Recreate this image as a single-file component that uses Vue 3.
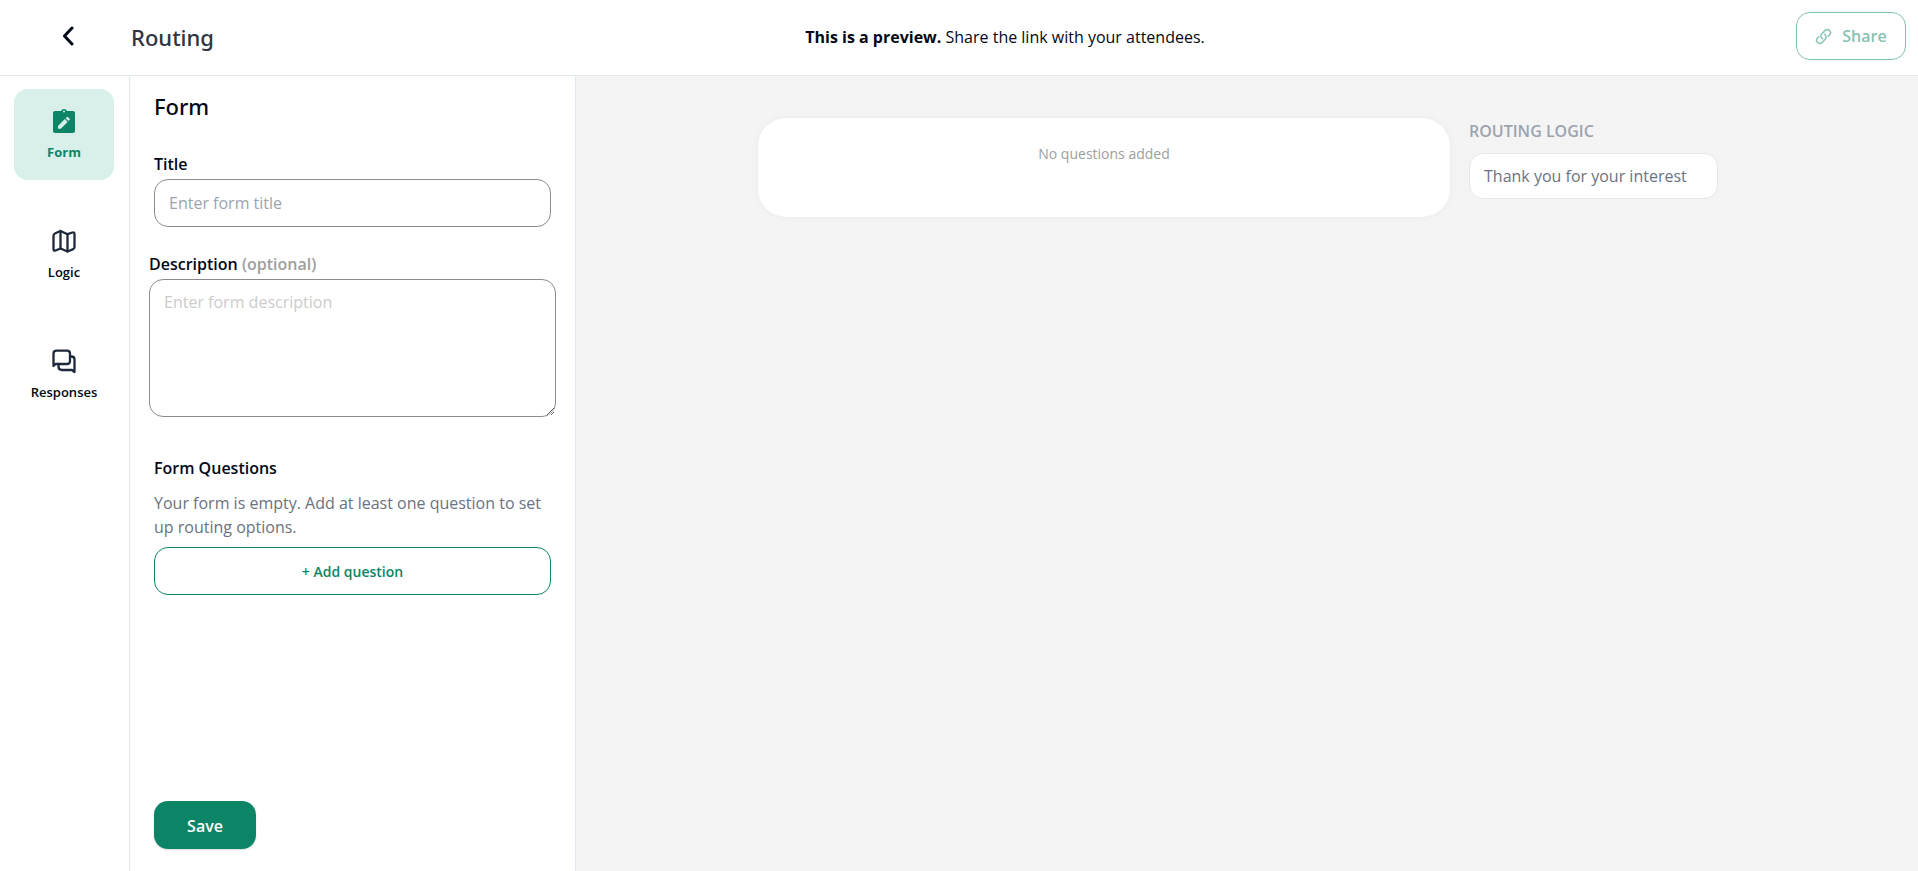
<template>
  <div class="page">
    <header class="top-bar">
      <div class="top-left">
        <button class="back-btn" aria-label="Back">
          <svg width="12" height="20" viewBox="0 0 12 20" fill="none" stroke="currentColor" stroke-width="3" stroke-linecap="round" stroke-linejoin="round">
            <path d="M10 2L2.500 10L10 18" />
          </svg>
        </button>
        <h1>Routing</h1>
      </div>
      <p class="preview-note"><strong>This is a preview.</strong> Share the link with your attendees.</p>
      <button class="share-btn" disabled>
        <svg width="17" height="17" viewBox="0 0 24 24" fill="none" stroke="currentColor" stroke-width="2" stroke-linecap="round" stroke-linejoin="round">
          <path d="M13.190 8.688a4.500 4.500 0 0 1 1.242 7.244l-4.500 4.500a4.500 4.500 0 0 1-6.364-6.364l1.757-1.757m13.350-.622 1.757-1.757a4.500 4.500 0 0 0-6.364-6.364l-4.500 4.500a4.500 4.500 0 0 0 1.242 7.244" />
        </svg>
        Share
      </button>
    </header>

    <div class="body">
      <nav class="side-nav">
        <button
          v-for="tab in tabs"
          :key="tab.name"
          class="nav-item"
          :class="{ active: tab.name === activeTab }"
          @click="activeTab = tab.name"
        >
          <svg v-if="tab.name === 'Form'" width="28" height="28" viewBox="0 0 28 28" fill="currentColor" fill-rule="evenodd">
            <path d="M5 3H11Q11.700 1 14 1T17 3H23Q25 3 25 5V23Q25 25 23 25H5Q3 25 3 23V5Q3 3 5 3ZM14 2.600A1 1 0 0 0 14 4.600A1 1 0 0 0 14 2.600ZM8 17.900V20.700H10.800L17.600 13.900L14.800 11.100ZM15.600 10.300L18.400 13.100L19.700 11.800Q20.200 11.300 19.700 10.800L17.900 9Q17.400 8.500 16.900 9Z" />
          </svg>
          <svg v-else-if="tab.name === 'Logic'" width="28" height="28" viewBox="0 1 28 28" fill="none" stroke="currentColor" stroke-width="2.300" stroke-linecap="round" stroke-linejoin="round">
            <path d="M10.500 4L5.300 6.300Q3.500 7.100 3.500 8.800V22Q3.500 24.200 5.500 23.500L10.500 21.500L17.500 24.500L22.700 22.400Q24.500 21.600 24.500 20V7Q24.500 5 22.500 5.500L17.500 7.200Z" />
            <path d="M10.500 4V21.500M17.500 7.200V24.500" />
          </svg>
          <svg v-else width="28" height="28" viewBox="0 1 28 28" fill="none" stroke="currentColor" stroke-width="2.300" stroke-linecap="round" stroke-linejoin="round">
            <path d="M3.500 19V6.500Q3.500 3.700 6.500 3.700H17Q20 3.700 20 6.500V14Q20 17 17 17H5.500Z" />
            <path d="M20 9.500H21.500Q24.500 9.500 24.500 12.500V25L22 23H12Q8.500 23 8.500 19.500V17" />
          </svg>
          <span>{{ tab.name }}</span>
        </button>
      </nav>

      <form class="form-panel" @submit.prevent>
        <h2>Form</h2>

        <div class="field">
          <label for="form-title">Title</label>
          <input id="form-title" v-model="form.title" type="text" placeholder="Enter form title" />
        </div>

        <div class="field wide">
          <label for="form-description">Description <span class="optional">(optional)</span></label>
          <textarea id="form-description" v-model="form.description" placeholder="Enter form description"></textarea>
        </div>

        <section class="questions">
          <h3>Form Questions</h3>
          <p>Your form is empty. Add at least one question to set up routing options.</p>
          <button type="button" class="add-btn">+ Add question</button>
        </section>

        <button type="submit" class="save-btn">Save</button>
      </form>

      <main class="preview">
        <div class="preview-card">No questions added</div>
        <aside class="routing">
          <h4>ROUTING LOGIC</h4>
          <div class="routing-item">Thank you for your interest</div>
        </aside>
      </main>
    </div>
  </div>
</template>

<script setup>
import { reactive, ref } from "vue";

const tabs = [{ name: "Form" }, { name: "Logic" }, { name: "Responses" }];
const activeTab = ref("Form");

const form = reactive({
  title: "",
  description: "",
});
</script>

<style>
body {
  margin: 0;
}
</style>

<style scoped>
.page {
  display: flex;
  flex-direction: column;
  min-height: 100vh;
  background: #fff;
  color: #020817;
  font-family: "Segoe UI", "Open Sans", "Noto Sans", sans-serif;
  font-size: 16px;
  line-height: 24px;
}

.page *,
.page {
  box-sizing: border-box;
}

h1,
h2,
h3,
h4,
p {
  margin: 0;
  font-weight: 600;
}

h1,
h2 {
  font-family: "Segoe UI", "Noto Sans", sans-serif;
  font-size: 22px;
  font-weight: 500;
  line-height: 32px;
}

button,
input,
textarea {
  font: inherit;
  color: inherit;
}

button {
  cursor: pointer;
}

/* Top bar */
.top-bar {
  display: flex;
  align-items: center;
  justify-content: space-between;
  padding: 12px 12px 15px 48px;
  border-bottom: 1px solid #e2e8f0;
}

.top-left {
  display: flex;
  align-items: center;
  gap: 43px;
}

.back-btn {
  display: flex;
  justify-content: center;
  width: 40px;
  padding: 0;
  border: none;
  background: transparent;
}

h1 {
  padding-top: 2px;
  color: #2f3440;
}

.preview-note {
  padding-top: 2px;
  font-weight: 400;
}

.preview-note strong {
  font-weight: 700;
}

.share-btn {
  display: flex;
  align-items: center;
  justify-content: center;
  gap: 10px;
  width: 110px;
  height: 48px;
  padding: 0;
  border: 1px solid #0b8566;
  border-radius: 14px;
  background: #fff;
  color: #0b8566;
  font-weight: 600;
  opacity: 0.5;
}

.body {
  display: flex;
  flex: 1;
}

/* Side nav */
.side-nav {
  display: flex;
  flex-direction: column;
  gap: 29px;
  width: 130px;
  padding: 13px 14px;
  border-right: 1px solid #e2e8f0;
}

.nav-item {
  display: flex;
  flex-direction: column;
  align-items: center;
  gap: 4px;
  width: 100px;
  height: 91px;
  padding: 19px 0 0;
  border: none;
  border-radius: 14px;
  background: transparent;
  font-size: 13px;
  font-weight: 600;
}

.nav-item svg {
  color: #1e293b;
}

.nav-item.active {
  background: #d8f0e9;
  color: #0b8566;
  font-weight: 700;
}

.nav-item.active svg {
  color: #0b8566;
}

/* Form panel */
.form-panel {
  display: flex;
  flex-direction: column;
  width: 446px;
  padding: 14px 24px 22px;
  border-right: 1px solid #e2e8f0;
}

h2 {
  margin-bottom: 30px;
}

.field {
  display: flex;
  flex-direction: column;
  gap: 3px;
  margin-bottom: 25px;
  font-weight: 600;
}

.field.wide {
  margin: 0 -5px 39px;
}

.optional {
  color: #9e9e9e;
}

.field input,
.field textarea {
  width: 100%;
  height: 48px;
  padding: 0 14px;
  border: 1px solid #8c8c8c;
  border-radius: 14px;
  background: #fff;
  font-weight: 400;
}

.field textarea {
  height: 138px;
  padding: 10px 14px;
  resize: vertical;
}

.field input::placeholder {
  color: #9ca3af;
}

.field textarea::placeholder {
  color: #cccccc;
}

.questions {
  display: flex;
  flex-direction: column;
}

h3 {
  margin-bottom: 11px;
  font-size: 16px;
}

.questions p {
  margin-bottom: 8px;
  font-weight: 400;
  color: #6b7280;
}

.add-btn {
  height: 48px;
  padding: 2px 0 0;
  border: 1px solid #0b8566;
  border-radius: 14px;
  background: #fff;
  color: #0b8566;
  font-size: 14px;
  font-weight: 600;
}

.save-btn {
  width: 102px;
  height: 48px;
  margin-top: auto;
  padding: 2px 0 0;
  border: none;
  border-radius: 14px;
  background: #0b8566;
  box-shadow: 0 1px 2px rgba(0, 0, 0, 0.15);
  color: #fff;
  font-weight: 600;
}

/* Preview */
.preview {
  display: flex;
  flex: 1;
  align-items: flex-start;
  justify-content: center;
  gap: 19px;
  padding: 42px 18px 24px 0;
  background: #f4f4f4;
}

.preview-card {
  flex: 0 1 692px;
  height: 99px;
  padding-top: 24px;
  border-radius: 28px;
  background: #fff;
  box-shadow: 0 0 6px rgba(0, 0, 0, 0.05);
  color: #9e9e9e;
  font-size: 14px;
  text-align: center;
}

.routing {
  flex: 0 0 249px;
  padding-top: 1px;
}

h4 {
  margin-bottom: 10px;
  font-size: 16px;
  color: #9ca3af;
}

.routing-item {
  padding: 10px 14px;
  border: 1px solid #e2e8f0;
  border-radius: 14px;
  background: #fff;
  color: #6b7280;
}
</style>
